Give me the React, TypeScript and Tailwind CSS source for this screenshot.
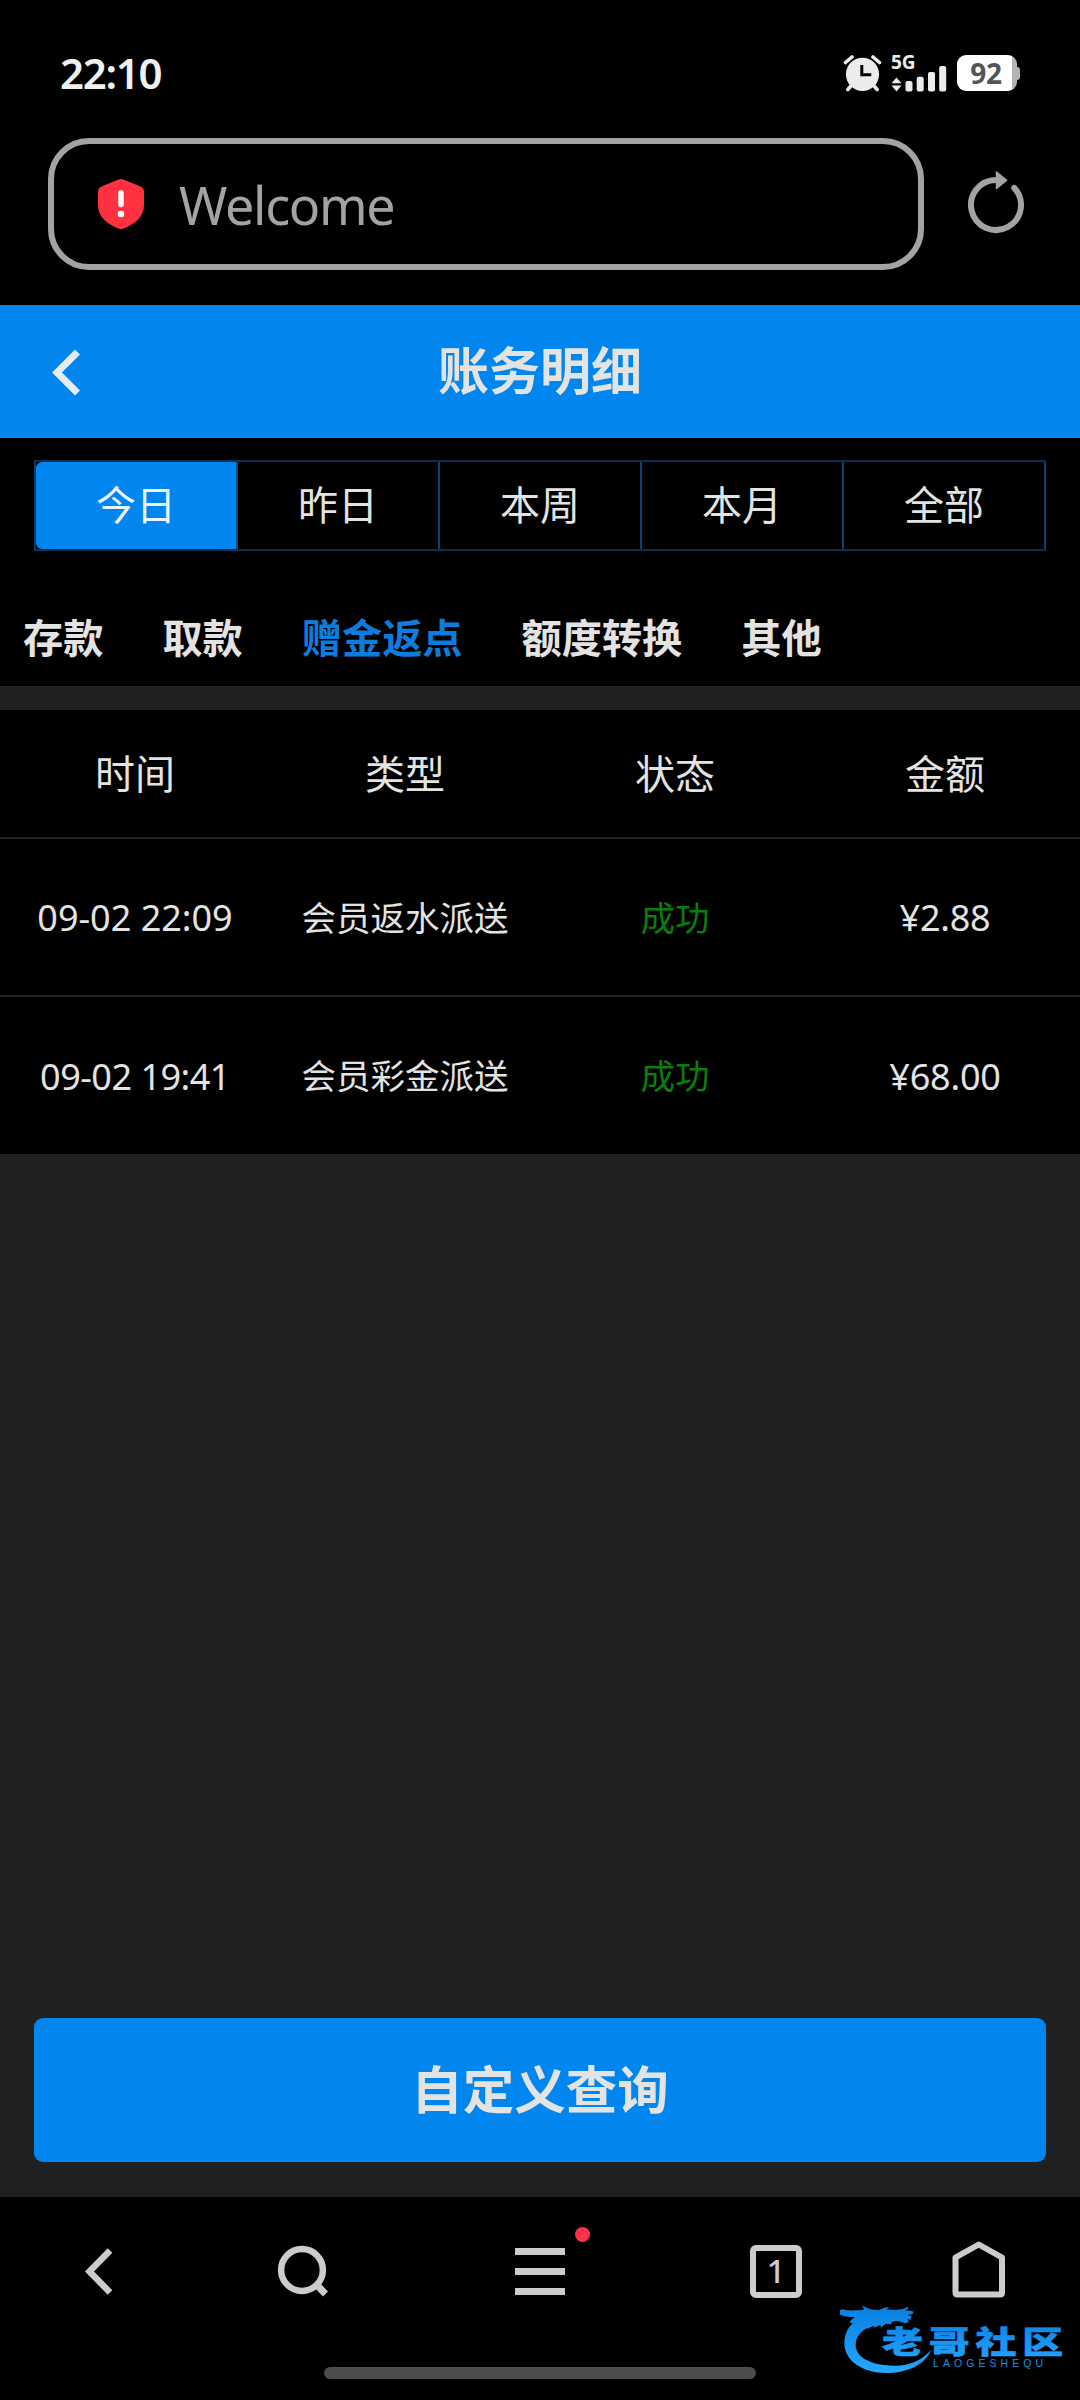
const CJK = "font-['Noto_Sans_CJK_SC',sans-serif]";
const LATIN = "font-['Noto_Sans','Noto_Sans_CJK_SC',sans-serif]";

const periods = ['今日', '昨日', '本周', '本月', '全部'];
const categories = ['存款', '取款', '赠金返点', '额度转换', '其他'];
const columns = ['时间', '类型', '状态', '金额'];
const records = [
  { time: '09-02 22:09', type: '会员返水派送', status: '成功', amount: '¥2.88' },
  { time: '09-02 19:41', type: '会员彩金派送', status: '成功', amount: '¥68.00' },
];

function StatusBar() {
  return (
    <div className="flex h-[138px] shrink-0 items-start justify-between pl-[60px] pr-[60px]">
      <div className={`${LATIN} mt-[45px] text-[42px] font-semibold leading-[56px] tracking-[-1.3px] text-[#f0f0f0]`}>22:10</div>
      <div className="mt-[54px] flex h-[38px] items-start">
        <svg className="mr-[9px]" width="39" height="38" viewBox="0 0 39 38">
          <circle cx="19.5" cy="20.3" r="16.6" fill="#ececec" />
          <path d="M2.500 8.500 9 3M36.500 8.500 30 3" stroke="#ececec" strokeWidth="3.600" strokeLinecap="round" />
          <path d="M8 32 4.800 35.500M31 32 34.200 35.500" stroke="#ececec" strokeWidth="3.600" strokeLinecap="round" />
          <path d="M18.800 11v9.700h9.500" stroke="#000" strokeWidth="3" fill="none" />
        </svg>
        <div className="mr-[10px] h-[38px] w-[56px]">
          <div className={`${LATIN} h-[20px] text-[19px] font-bold leading-[17px] text-[#ececec]`}>5G</div>
          <svg className="-mt-[10px]" width="56" height="28" viewBox="0 0 56 28" fill="#ececec">
            <path d="M5.500 13.500 10.500 19.300H.5zM5.500 27.500 10.500 21.500H.5z" />
            <rect x="14.500" y="17" width="7" height="10.500" rx="2" />
            <rect x="25.700" y="12.700" width="7" height="14.800" rx="2" />
            <rect x="37" y="8" width="7" height="19.500" rx="2" />
            <rect x="48.200" y="2" width="7" height="25.500" rx="2" />
          </svg>
        </div>
        <div className="mt-px flex items-center">
          <div className={`${LATIN} flex h-[36px] w-[60px] items-center justify-center rounded-[9px] bg-[linear-gradient(90deg,#fff_54.500px,#b3b3b3_54.500px)] pr-[2px] text-[28px] font-bold leading-none tracking-[-0.3px] text-[#555]`}>
            92
          </div>
          <div className="h-[13px] w-[3px] rounded-r-[3px] bg-[#b3b3b3]" />
        </div>
      </div>
    </div>
  );
}

function AddressBar() {
  return (
    <div className="flex h-[167px] shrink-0 items-start pl-12">
      <div className="flex h-[132px] w-[876px] items-center rounded-[41px] border-[6px] border-[#a3a3a3] pl-[44px]">
        <svg width="46" height="52" viewBox="0 0 46 52">
          <path d="M20.500 1.500q2.500-1 5 0l17 7q3.500 1.500 3.500 5V27c0 12-9 19-20.500 23.500q-2.500 1-5 0C9 46 0 39 0 27V13.500q0-3.500 3.500-5z" fill="#ff3040" />
          <path d="M23 15v11.500" stroke="#fff" strokeWidth="5.500" strokeLinecap="round" />
          <circle cx="23" cy="36" r="3.300" fill="#fff" />
        </svg>
        <span className={`${LATIN} ml-[35px] pt-[2px] text-[52px] leading-none tracking-[-1.3px] text-[#a3a3a3]`}>Welcome</span>
      </div>
      <svg className="ml-[40px] mt-[29px]" width="64" height="70" viewBox="0 0 64 70">
        <path d="M32 13A25 25 0 1 0 50.200 20.860" stroke="#a3a3a3" strokeWidth="6" fill="none" strokeLinecap="round" />
        <path d="M32.500 5v16.500l10.200-8.250z" fill="#a3a3a3" stroke="#a3a3a3" strokeWidth="1.500" strokeLinejoin="round" />
      </svg>
    </div>
  );
}

function BrandMark() {
  return (
    <svg className="absolute left-[840px] top-[2302px]" width="230" height="76" viewBox="840 2302 230 76">
      <defs>
        <linearGradient id="brand" gradientUnits="userSpaceOnUse" x1="0" y1="-36" x2="0" y2="14">
          <stop offset="0" stopColor="#0a80e0" />
          <stop offset="1" stopColor="#25a9ff" />
        </linearGradient>
        <linearGradient id="dragon" gradientUnits="userSpaceOnUse" x1="0" y1="30" x2="0" y2="230">
          <stop offset="0" stopColor="#0a80e0" />
          <stop offset=".5" stopColor="#1593f2" />
          <stop offset="1" stopColor="#25a9ff" />
        </linearGradient>
      </defs>
      <g fill="url(#dragon)" transform="translate(837 2297) scale(.33333)">
        <path d="M80 58C44 74 22 100 22 138c0 54 56 90 124 90 66 0 120-26 136-70-26 32-65 48-109 48C104 206 56 182 56 144c0-28 20-50 56-58z" />
        <path d="M18 37c16 6 34 2 54 3l10-3-8-12c8 4 16 8 26 12 8 2 16 0 26 2 8-2 16-10 30-8l-8 8c14-4 28 4 40-2 10 0 18-4 24-8 4 6-2 10-8 11 10 2 20 0 26 4l-4 8-16 2 14 4-4 10-10-2 6 6-6 6c-14 2-20-8-36-6l-12 4 4 6-20-2-14 12-2-8-20 8 2-8-22 12 4-12c-14 2-24 10-34 16l-6-14-16-12c6-6 10-10 16-14-18 0-44 0-60-17z" />
      </g>
      <g transform="translate(882 2353.200) scale(1.320 1)">
        <text x="0" y="0" fill="url(#brand)" fontFamily="Noto Sans CJK SC, sans-serif" fontSize="31" fontWeight="900" letterSpacing="4.400" stroke="url(#brand)" strokeWidth=".6">老哥社区</text>
      </g>
      <text x="933" y="2366.500" fill="#1f8fdc" fontFamily="Liberation Sans, sans-serif" fontSize="10.500" textLength="110" lengthAdjust="spacing">LAOGESHEQU</text>
    </svg>
  );
}

function BrowserNav() {
  return (
    <div className="flex h-[203px] shrink-0 flex-col bg-black">
      <div className="flex h-[150px] items-start pt-[38px]">
        <svg className="ml-[80px]" width="40" height="72" viewBox="80 2235 40 72">
          <path d="M110 2250.500 89.500 2271.500 110 2292.500" stroke="#ccc" strokeWidth="6.500" fill="none" />
        </svg>
        <svg className="ml-[154px]" width="60" height="72" viewBox="274 2235 60 72">
          <circle cx="302" cy="2270" r="20.900" stroke="#ccc" strokeWidth="6.500" fill="none" />
          <path d="M316 2284 325.500 2294" stroke="#ccc" strokeWidth="7" />
        </svg>
        <div className="ml-[181px] mt-[13px] flex h-[47px] w-[50px] flex-col justify-between">
          <div className="h-[7px] bg-[#ccc]" />
          <div className="h-[7px] bg-[#ccc]" />
          <div className="h-[7px] bg-[#ccc]" />
        </div>
        <div className="ml-[185px] mt-[10px] flex h-[53px] w-[52px] items-center justify-center rounded-[6px] border-[6px] border-[#ccc]">
          <span className={`${LATIN} -mt-[2px] text-[33px] font-medium leading-none text-[#ccc]`}>1</span>
        </div>
        <svg className="ml-[146px]" width="62" height="72" viewBox="948 2235 62 72">
          <path d="M955.500 2257.500 978.700 2244.500 1002 2257.500V2292.500q0 2-2 2H957.500q-2 0-2-2z" stroke="#ccc" strokeWidth="6" fill="none" strokeLinejoin="round" />
        </svg>
      </div>
      <div className="ml-[324px] mt-[20px] h-[12px] w-[432px] rounded-full bg-[#4d4d4d]" />
    </div>
  );
}

export default function App() {
  return (
    <div className={`${CJK} relative flex h-[2400px] w-[1080px] flex-col overflow-hidden bg-black text-[#e3e3e3]`}>
      <StatusBar />
      <AddressBar />

      <header className="flex h-[133px] shrink-0 items-center bg-[#0086ee]">
        <svg className="ml-[48px]" width="36" height="60" viewBox="48 342 36 60">
          <path d="M77.500 352 57 372.500 77.500 393" stroke="#e6ebf0" strokeWidth="7" fill="none" />
        </svg>
        <h1 className="mr-[84px] flex-1 pb-[6px] text-center text-[51px] font-bold leading-none">账务明细</h1>
      </header>

      <div className="mx-[34px] mt-[22px] flex h-[91px] shrink-0 border-y-2 border-l-2 border-y-[#0c2d50] border-l-[#063d6e]">
        {periods.map((p, i) => (
          <div
            key={p}
            className={
              i === 0
                ? 'flex flex-1 items-center justify-center rounded-l-[6px] border-r-2 border-[#0a4f8c] bg-[#0086ee] pb-[5px] text-[40px] leading-none text-[#eaf4fc]'
                : 'flex flex-1 items-center justify-center border-r-2 border-[#0a4374] pb-[5px] text-[40px] leading-none'
            }
          >
            {p}
          </div>
        ))}
      </div>

      <nav className="flex h-[135px] shrink-0 items-center gap-[59px] pl-[23px] pt-[36px] text-[40.200px] font-bold leading-none">
        {categories.map((c, i) => (
          <span key={c} className={i === 2 ? 'text-[#0d7ddd]' : ''}>{c}</span>
        ))}
      </nav>

      <main className="flex min-h-0 flex-1 flex-col bg-[#202123] pt-6">
        <div className="grid h-[129px] shrink-0 grid-cols-4 items-center border-b-2 border-[#222324] bg-black pb-[4px] text-center text-[40px] leading-none">
          {columns.map((c) => <span key={c}>{c}</span>)}
        </div>
        {records.map((r, i) => (
          <div
            key={r.time}
            className={
              i === 0
                ? 'grid h-[158px] shrink-0 grid-cols-4 items-center border-b-2 border-[#222324] bg-black text-center'
                : 'grid h-[157px] shrink-0 grid-cols-4 items-center bg-black text-center'
            }
          >
            <span className={i === 0 ? `${LATIN} whitespace-nowrap pt-[2px] text-[36px] leading-none` : `${LATIN} whitespace-nowrap pt-[2px] text-[36px] leading-none tracking-[-0.5px]`}>{r.time}</span>
            <span className="pb-[2px] text-[34.500px] leading-none">{r.type}</span>
            <span className="pb-[2px] text-[34.500px] leading-none text-[#087f0d]">{r.status}</span>
            <span className={`${LATIN} pt-[2px] text-[36px] leading-none tracking-[-0.2px]`}>{r.amount}</span>
          </div>
        ))}
        <button className="mx-[34px] mb-[35px] mt-auto flex h-[144px] shrink-0 items-center justify-center rounded-[9px] bg-[#0086ee] pb-[7px] text-[51.500px] font-bold leading-none">
          自定义查询
        </button>
      </main>

      <BrowserNav />
      <div className="absolute left-[575px] top-[2227px] size-[15px] rounded-full bg-[#ff3047]" />
      <BrandMark />
    </div>
  );
}
